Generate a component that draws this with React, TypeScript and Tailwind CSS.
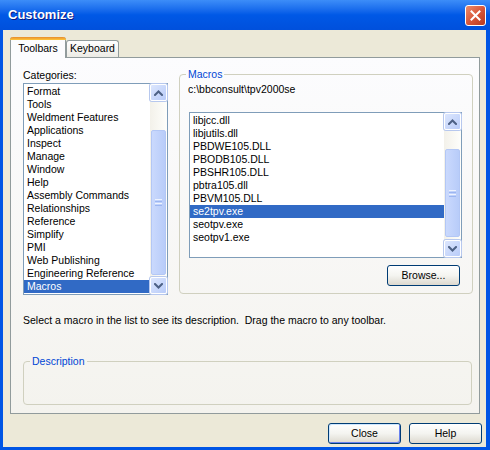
const categories = [
  "Format",
  "Tools",
  "Weldment Features",
  "Applications",
  "Inspect",
  "Manage",
  "Window",
  "Help",
  "Assembly Commands",
  "Relationships",
  "Reference",
  "Simplify",
  "PMI",
  "Web Publishing",
  "Engineering Reference",
  "Macros",
];

const macros = [
  "libjcc.dll",
  "libjutils.dll",
  "PBDWE105.DLL",
  "PBODB105.DLL",
  "PBSHR105.DLL",
  "pbtra105.dll",
  "PBVM105.DLL",
  "se2tpv.exe",
  "seotpv.exe",
  "seotpv1.exe",
];

function Chevron({ up }: { up?: boolean }) {
  return (
    <svg width="9" height="6" viewBox="0 0 9 6" fill="none">
      <path
        d={up ? "M1 5L4.5 1.5L8 5" : "M1 1L4.5 4.5L8 1"}
        stroke="#4D6185"
        strokeWidth="2"
        strokeLinecap="square"
      />
    </svg>
  );
}

function ArrowButton({ up }: { up?: boolean }) {
  return (
    <div className="h-[17px] w-[17px] shrink-0 rounded-[2px] border border-[#FFFFFF] bg-gradient-to-br from-[#DCE6FD] to-[#B9CCF9] shadow-[0_0_0_1px_#B7C8EE] flex items-center justify-center">
      <Chevron up={up} />
    </div>
  );
}

function Scrollbar({ before, thumb }: { before: string; thumb: string }) {
  return (
    <div className="w-[17px] shrink-0 flex flex-col bg-gradient-to-r from-[#F3F1EA] to-[#FEFEFB]">
      <ArrowButton up />
      <div className={before} />
      <div
        className={`${thumb} mx-px rounded-[2px] border border-[#B3C7F5] bg-gradient-to-r from-[#CAD9FD] to-[#B8CCF9] flex flex-col items-center justify-center gap-px`}
      >
        <div className="w-[7px] h-px bg-[#EEF3FE]" />
        <div className="w-[7px] h-px bg-[#9CB6F1]" />
        <div className="w-[7px] h-px bg-[#EEF3FE]" />
        <div className="w-[7px] h-px bg-[#9CB6F1]" />
      </div>
      <div className="flex-1" />
      <ArrowButton />
    </div>
  );
}

function ListBox({
  items,
  selected,
  className,
  before,
  thumb,
}: {
  items: string[];
  selected: string;
  className: string;
  before: string;
  thumb: string;
}) {
  return (
    <div className={`flex border border-[#7F9DB9] bg-white ${className}`}>
      <div className="flex-1 pt-px overflow-hidden">
        {items.map((it) => (
          <div
            key={it}
            className={`h-[13px] leading-[13px] pl-[3px] whitespace-nowrap ${
              it === selected ? "bg-[#316AC5] text-white" : "text-black"
            }`}
          >
            {it}
          </div>
        ))}
      </div>
      <Scrollbar before={before} thumb={thumb} />
    </div>
  );
}

function XPButton({ label, isDefault }: { label: string; isDefault?: boolean }) {
  return (
    <button
      className={`w-[73px] h-[21px] rounded-[3px] border border-[#003C74] bg-gradient-to-b from-[#FFFFFF] via-[#F4F4F0] to-[#DDD9CF] text-[10.5px] text-black ${
        isDefault ? "shadow-[inset_1px_1px_0_#CEE7FF,inset_-1px_-1px_0_#6982EE]" : ""
      }`}
    >
      {label}
    </button>
  );
}

export default function App() {
  return (
    <div className="w-[490px] h-[450px] bg-[#0055E5] flex flex-col font-['Liberation_Sans',Arial,sans-serif] text-[10.5px] text-black">
      {/* Title bar */}
      <div className="h-[30px] shrink-0 flex items-center justify-between pl-[8px] pr-[4px] bg-gradient-to-b from-[#3C8DF8] via-[#0058E6] to-[#0050DC]">
        <span className="text-[13px] font-bold text-white [text-shadow:1px_1px_0_#0A1883]">
          Customize
        </span>
        <div className="w-[21px] h-[21px] rounded-[3px] border border-white bg-gradient-to-br from-[#EB8C6C] via-[#D9573A] to-[#B8391E] flex items-center justify-center">
          <svg width="11" height="11" viewBox="0 0 11 11">
            <path d="M1.5 1.5L9.5 9.5M9.5 1.5L1.5 9.5" stroke="white" strokeWidth="2" strokeLinecap="square" />
          </svg>
        </div>
      </div>

      {/* Body */}
      <div className="flex-1 ml-[3px] mr-[4px] mb-[3px] bg-[#ECE9D8] pt-[7px] pl-[7px] pr-[6px] flex flex-col">
        {/* Tabs */}
        <div className="h-[20px] flex items-end relative z-10">
          <div className="w-[56px] h-[21px] -mb-px rounded-t-[3px] border-x border-[#919B9C] bg-[#FCFCFE] flex flex-col">
            <div className="h-[3px] -mx-px rounded-t-[3px] bg-gradient-to-b from-[#E68B2C] to-[#FFC73C]" />
            <div className="flex-1 flex items-center justify-center">Toolbars</div>
          </div>
          <div className="w-[53px] h-[17px] rounded-t-[3px] border border-b-0 border-[#919B9C] bg-gradient-to-b from-[#FFFFFF] to-[#ECEBE5] flex items-center justify-center">
            Keyboard
          </div>
        </div>

        {/* Panel */}
        <div className="w-[470px] h-[357px] border border-[#919B9C] bg-gradient-to-b from-[#FCFCFE] to-[#F4F3EE] pl-[12px] pt-[11px] flex flex-col">
          <div className="flex gap-[11px]">
            <div className="flex flex-col">
              <div className="h-[13px] leading-[13px] mb-px">Categories:</div>
              <ListBox
                items={categories}
                selected="Macros"
                className="w-[145px] h-[212px]"
                before="h-[29px]"
                thumb="h-[145px]"
              />
            </div>

            <fieldset className="w-[294px] h-[226px] -mt-px rounded-[4px] border border-[#D0D0BF] pl-[8px]">
              <legend className="-ml-[2px] px-[2px] text-[#0046D5] leading-[13px]">Macros</legend>
              <div className="mt-[2px] h-[13px] leading-[13px]">c:\bbconsult\tpv2000se</div>
              <ListBox
                items={macros}
                selected="se2tpv.exe"
                className="mt-[16px] ml-px w-[273px] h-[146px]"
                before="h-[19px]"
                thumb="h-[88px]"
              />
              <div className="mt-[7px] w-[273px] flex justify-end pr-px">
                <XPButton label="Browse..." />
              </div>
            </fieldset>
          </div>

          <div className="mt-[19px] h-[13px] leading-[13px] whitespace-pre">
            {"Select a macro in the list to see its description.  Drag the macro to any toolbar."}
          </div>

          <fieldset className="mt-[28px] w-[449px] h-[50px] rounded-[4px] border border-[#D0D0BF]">
            <legend className="ml-[6px] px-[2px] text-[#0046D5] leading-[13px]">Description</legend>
          </fieldset>
        </div>

        {/* Footer */}
        <div className="mt-[9px] -mr-[2px] flex justify-end gap-[8px]">
          <XPButton label="Close" isDefault />
          <XPButton label="Help" />
        </div>
      </div>
    </div>
  );
}
